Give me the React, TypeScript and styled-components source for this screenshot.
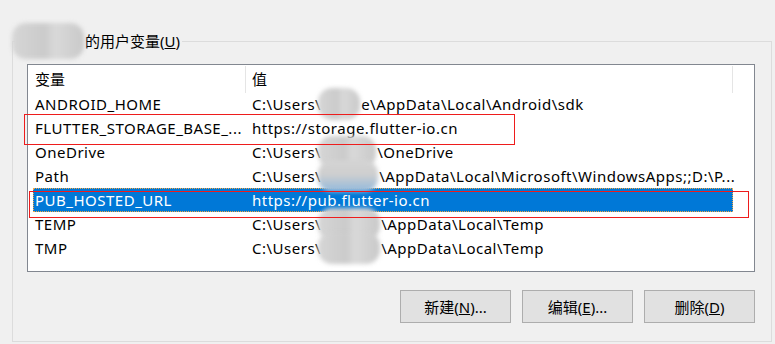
import styled, { createGlobalStyle, css } from "styled-components";

const GlobalStyle = createGlobalStyle`
  html, body {
    margin: 0;
    padding: 0;
    background: #f0f0f0;
    width: 775px;
    height: 344px;
    overflow: hidden;
  }
  body {
    font-family: "Noto Sans", "Noto Sans CJK SC", sans-serif;
    font-size: 15px;
    color: #000;
  }
`;

const Group = styled.fieldset`
  box-sizing: border-box;
  width: 760px;
  height: 311px;
  margin: 31px 0 0 12px;
  padding: 13px 16px 0 14px;
  border: 1px solid #dcdcdc;
  min-width: 0;
`;

const Legend = styled.legend`
  margin-left: -12px;
  padding: 0 2px 0 0;
  line-height: 20px;
  height: 20px;
  display: flex;
  align-items: center;
  white-space: nowrap;
`;

const Redact = styled.span<{ $w: number; $tint?: boolean; $tall?: boolean }>`
  position: relative;
  display: inline-block;
  width: ${(p) => p.$w}px;
  height: 20px;
  vertical-align: middle;
  &::before {
    content: "";
    position: absolute;
    left: -3px;
    right: 1px;
    top: ${(p) => (p.$tall ? -8 : -6)}px;
    bottom: ${(p) => (p.$tall ? -8 : -6)}px;
    border-radius: 14px;
    background: ${(p) =>
      p.$tint
        ? "linear-gradient(180deg, #d4d4d4 0%, #cfcfcf 45%, #8fb8dd 100%)"
        : "linear-gradient(90deg, #d6d6d6 0%, #cbcbcb 45%, #d9d9d9 60%, #c9c9c9 100%)"};
    filter: blur(2px);
  }
`;

const List = styled.div`
  position: relative;
  box-sizing: border-box;
  width: 728px;
  height: 208px;
  background: #fff;
  border: 1px solid #828790;
`;

const Header = styled.div`
  display: flex;
  height: 27px;
`;

const HeaderCell = styled.div<{ $w: number; $pad: number }>`
  box-sizing: border-box;
  width: ${(p) => p.$w}px;
  padding-left: ${(p) => p.$pad}px;
  height: 27px;
  line-height: 27px;
  margin-top: 1px;
  border-right: 1px solid #e5e5e5;
`;

const Row = styled.div<{ $selected?: boolean }>`
  display: flex;
  align-items: center;
  box-sizing: border-box;
  width: 700px;
  height: 24px;
  margin-left: 5px;
  white-space: nowrap;
  letter-spacing: 0.5px;
  ${(p) =>
    p.$selected &&
    css`
      background: #0078d7;
      color: #fff;
      outline: 1px dotted #f5a742;
      outline-offset: -1px;
    `}
`;

const NameCell = styled.div`
  width: 219px;
  padding-left: 2px;
  box-sizing: border-box;
  flex-shrink: 0;
`;

const ValueCell = styled.div`
  display: flex;
  align-items: center;
`;

const Mark = styled.div<{ $l: number; $t: number; $w: number; $h: number }>`
  position: absolute;
  left: ${(p) => p.$l}px;
  top: ${(p) => p.$t}px;
  width: ${(p) => p.$w}px;
  height: ${(p) => p.$h}px;
  box-sizing: border-box;
  border: 1.5px solid #ee1c1c;
  pointer-events: none;
`;

const Buttons = styled.div`
  display: flex;
  justify-content: flex-end;
  gap: 11px;
  margin-top: 18px;
`;

const Button = styled.button`
  box-sizing: border-box;
  width: 111px;
  height: 33px;
  background: #e1e1e1;
  border: 1px solid #adadad;
  font: inherit;
  color: #000;
  padding: 0;
`;

type Var = {
  name: string;
  pre?: string;
  blur?: number;
  tint?: boolean;
  value: string;
  selected?: boolean;
};

const vars: Var[] = [
  { name: "ANDROID_HOME", pre: "C:\\Users\\", blur: 40, value: "e\\AppData\\Local\\Android\\sdk" },
  { name: "FLUTTER_STORAGE_BASE_...", value: "https://storage.flutter-io.cn" },
  { name: "OneDrive", pre: "C:\\Users\\", blur: 56, value: "\\OneDrive" },
  { name: "Path", pre: "C:\\Users\\", blur: 58, tint: true, value: "\\AppData\\Local\\Microsoft\\WindowsApps;;D:\\P..." },
  { name: "PUB_HOSTED_URL", value: "https://pub.flutter-io.cn", selected: true },
  { name: "TEMP", pre: "C:\\Users\\", blur: 60, value: "\\AppData\\Local\\Temp" },
  { name: "TMP", pre: "C:\\Users\\", blur: 60, value: "\\AppData\\Local\\Temp" },
];

export default function App() {
  return (
    <>
      <GlobalStyle />
      <Group>
        <Legend>
          <Redact $w={70} $tall />
          的用户变量(<u>U</u>)
        </Legend>
        <List>
          <Header>
            <HeaderCell $w={218} $pad={7}>变量</HeaderCell>
            <HeaderCell $w={487} $pad={6}>值</HeaderCell>
          </Header>
          {vars.map((v) => (
            <Row key={v.name} $selected={v.selected}>
              <NameCell>{v.name}</NameCell>
              <ValueCell>
                {v.pre}
                {v.blur && <Redact $w={v.blur} $tint={v.tint} />}
                {v.value}
              </ValueCell>
            </Row>
          ))}
          <Mark $l={-4} $t={49} $w={491} $h={31} />
          <Mark $l={1} $t={126} $w={720} $h={27} />
        </List>
        <Buttons>
          <Button>新建(<u>N</u>)...</Button>
          <Button>编辑(<u>E</u>)...</Button>
          <Button>删除(<u>D</u>)</Button>
        </Buttons>
      </Group>
    </>
  );
}
